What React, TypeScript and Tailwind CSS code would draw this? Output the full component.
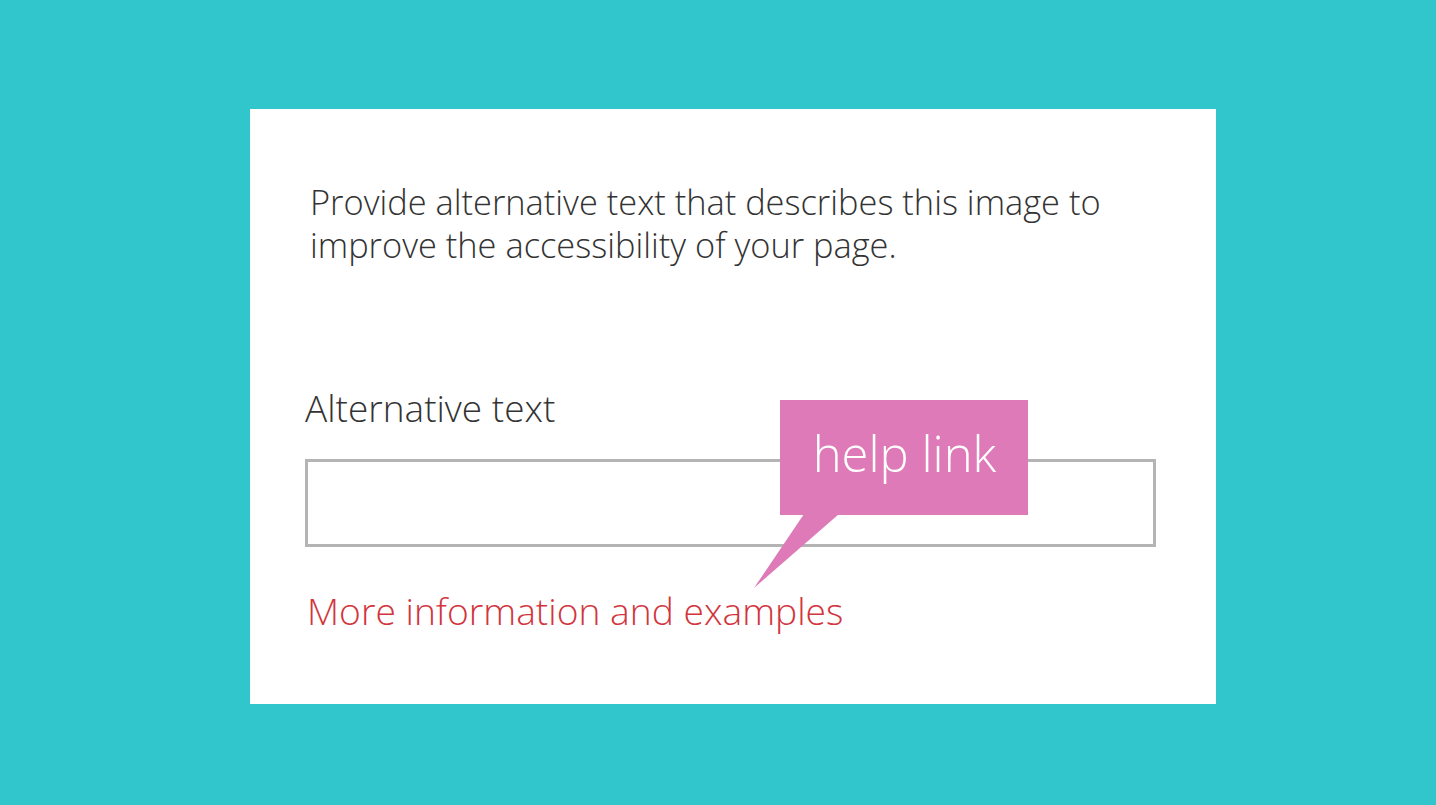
import React from 'react'

const font = { fontFamily: '"Open Sans", "Noto Sans", sans-serif' }

const HelpCallout = () => (
  <div className="absolute left-[530px] top-[291px] w-[248px] h-[115px] bg-[#de7ab8]">
    <svg
      className="absolute left-[-26px] top-[114px]"
      width="90"
      height="75"
      viewBox="0 0 90 75"
    >
      <polygon points="50,0 85,0 0,74" fill="#de7ab8" />
    </svg>
    <div className="pt-[29px] pl-[1px] text-center text-white font-light text-[49px] leading-none">
      help link
    </div>
  </div>
)

export default function App() {
  return (
    <div className="w-full h-[805px] bg-[#31c6cc] pt-[109px] pl-[250px]" style={font}>
      <div className="relative w-[966px] h-[595px] bg-white">
        <p className="pl-[60px] pt-[71px] text-[34.4px] leading-[43px] font-light text-[#333333] w-[880px]">
          Provide alternative text that describes this image to improve the accessibility of your page.
        </p>
        <div className="pl-[55px] pt-[120px]">
          <div className="text-[37px] leading-[43px] font-light text-[#333333]">Alternative text</div>
          <div className="mt-[30px] w-[851px] h-[88px] border-[3px] border-[#b4b4b4]"></div>
          <a href="#" className="block mt-[42px] pl-[2px] text-[37.2px] leading-[43px] font-light text-[#d2353d]">
            More information and examples
          </a>
        </div>
        <HelpCallout />
      </div>
    </div>
  )
}
